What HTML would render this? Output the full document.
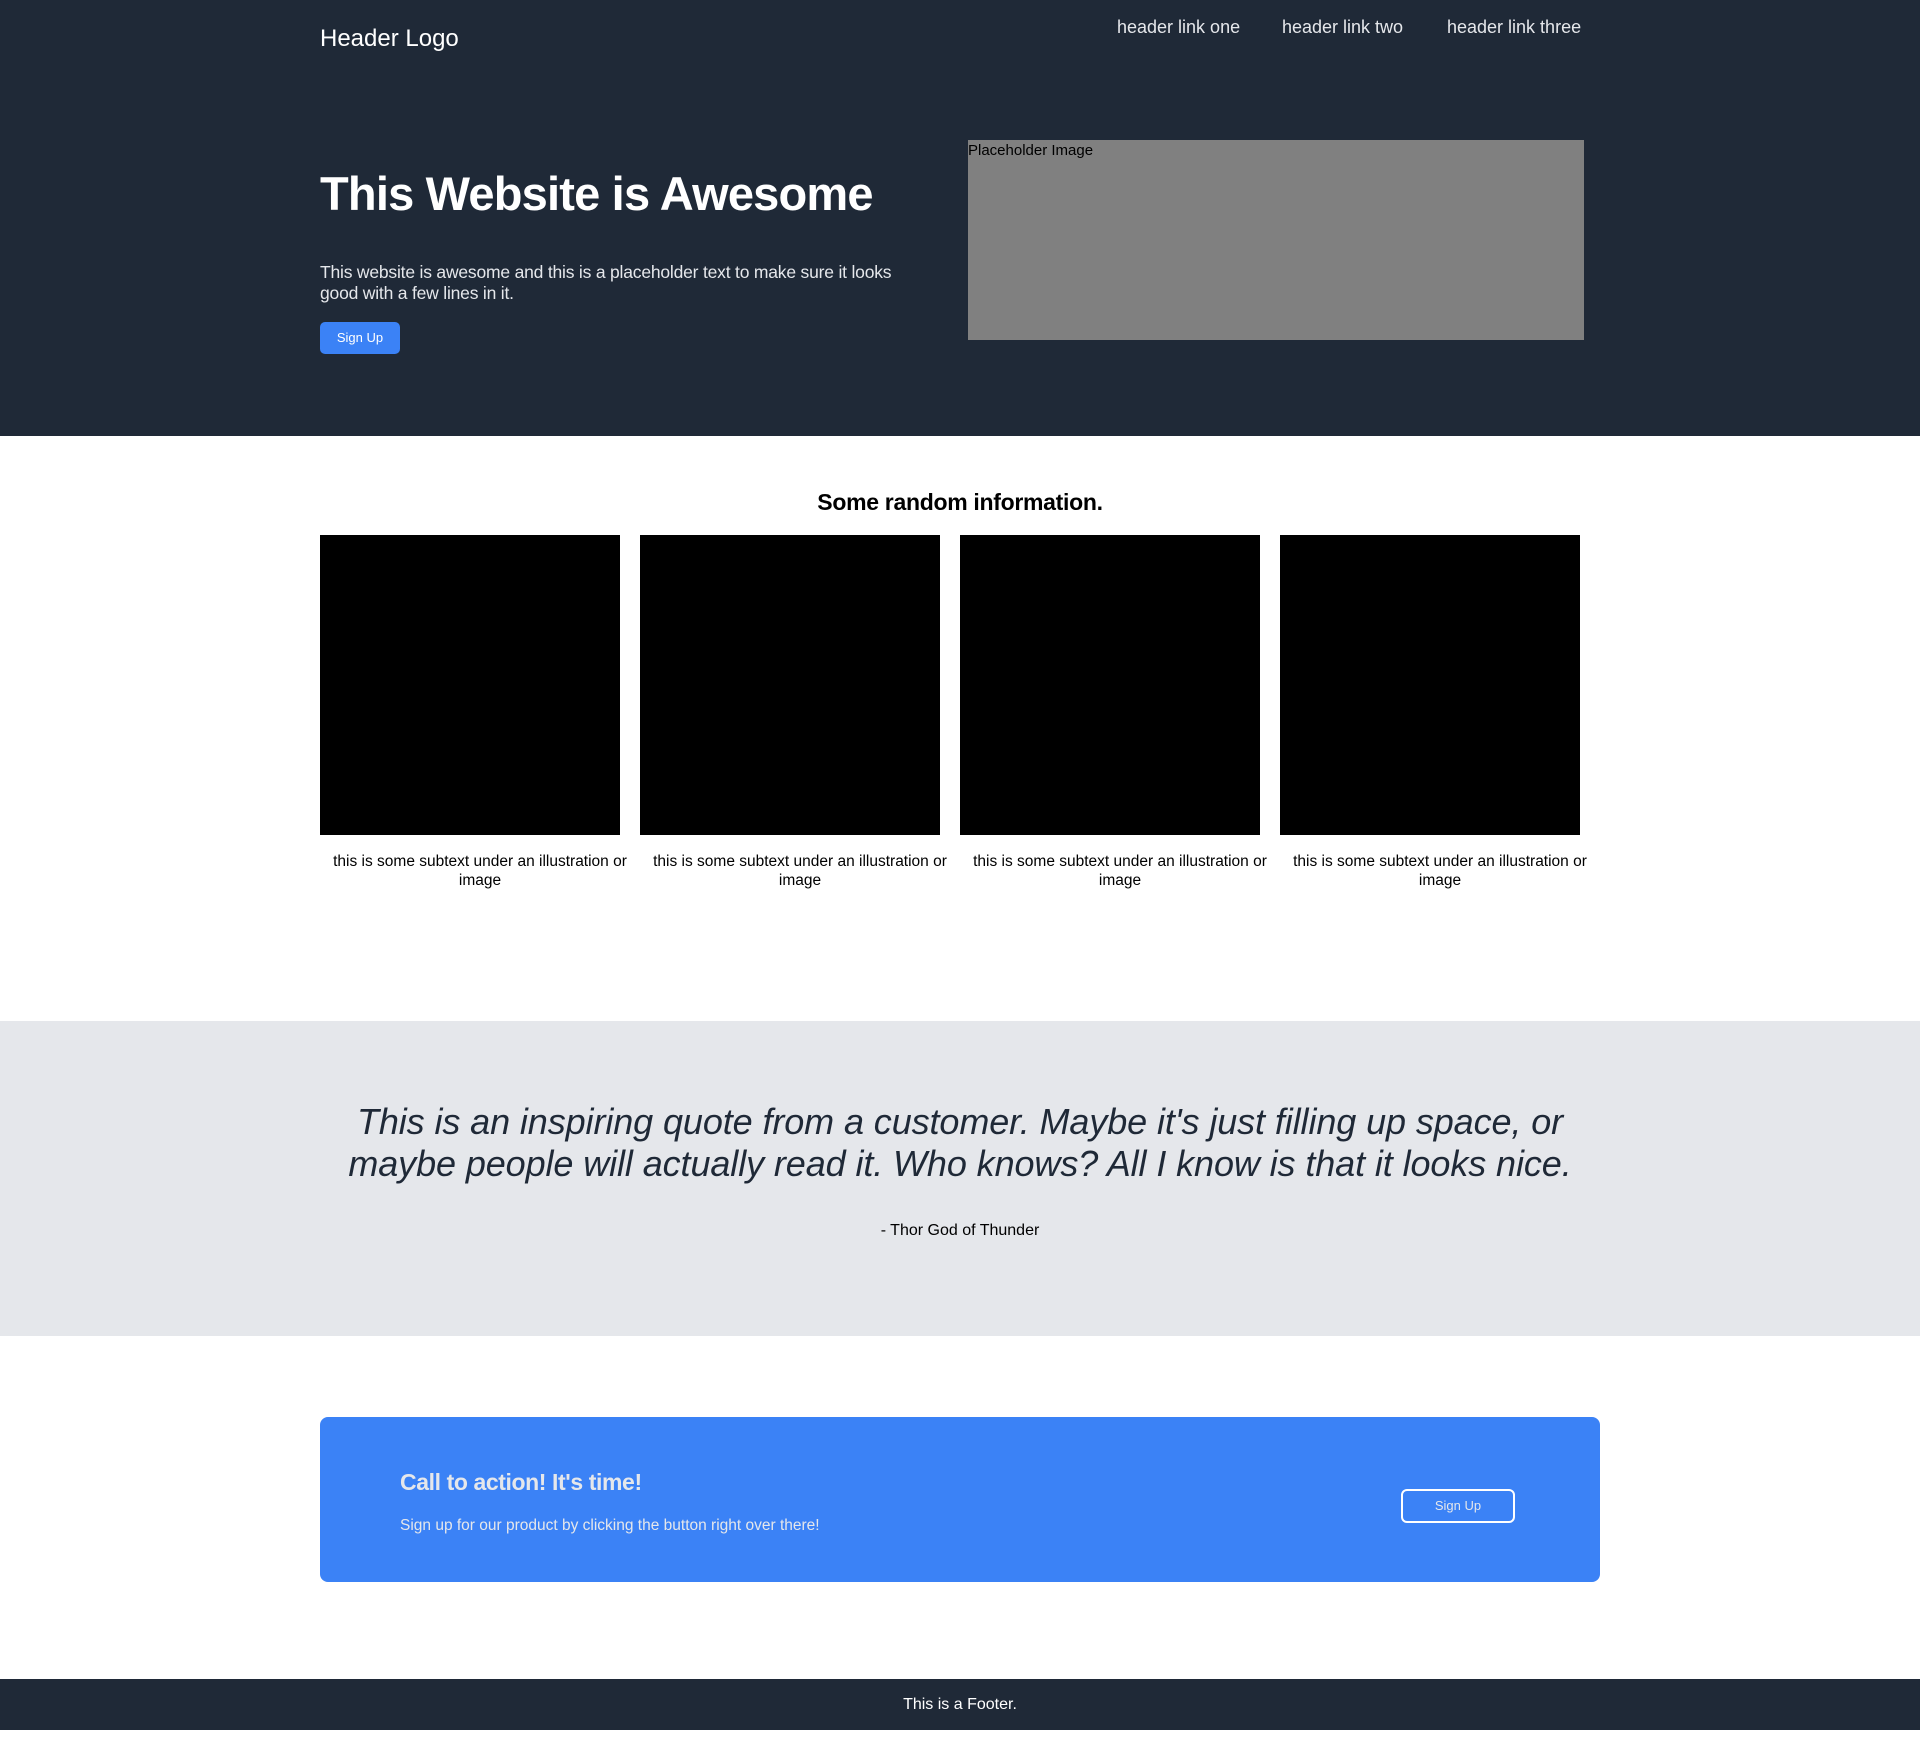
<!DOCTYPE html>
<html><head><meta charset="utf-8"><style>
*{margin:0;padding:0;box-sizing:border-box}
body{width:1920px;height:1746px;font-family:"Liberation Sans",Arial,sans-serif;background:#fff;position:relative;overflow:hidden}
.abs{position:absolute}
.hdr{left:0;top:0;width:1920px;height:436px;background:#1f2937}
.w{color:#fff}
.btn{background:#3b82f6;color:#fff;border-radius:5px;font-size:13px;text-align:center}
.card{width:300px;height:300px;background:#000;top:535px}
.sub{width:320px;top:852px;font-size:15.5px;line-height:19px;text-align:center;color:#000}
</style></head><body>
<div class="abs hdr"></div>
<div class="abs w" style="left:320px;top:25px;font-size:24px">Header Logo</div>
<div class="abs" style="left:1117px;top:17px;font-size:18px;color:#e5e7eb">header link one</div>
<div class="abs" style="left:1282px;top:17px;font-size:18px;color:#e5e7eb">header link two</div>
<div class="abs" style="left:1447px;top:17px;font-size:18px;color:#e5e7eb">header link three</div>
<div class="abs w" style="left:320px;top:166px;font-size:47px;font-weight:bold;letter-spacing:-0.8px">This Website is Awesome</div>
<div class="abs" style="left:320px;top:262px;width:605px;font-size:17.5px;line-height:21px;color:#e5e7eb;letter-spacing:-0.2px">This website is awesome and this is a placeholder text to make sure it looks good with a few lines in it.</div>
<div class="abs btn" style="left:320px;top:322px;width:80px;height:32px;line-height:32px">Sign Up</div>
<div class="abs" style="left:968px;top:140px;width:616px;height:200px;background:#808080;font-size:15px;color:#000;padding-top:2px">Placeholder Image</div>
<div class="abs" style="left:0;top:489px;width:1920px;text-align:center;font-size:23px;font-weight:bold;color:#000;letter-spacing:-0.3px">Some random information.</div>
<div class="abs card" style="left:320px"></div>
<div class="abs card" style="left:640px"></div>
<div class="abs card" style="left:960px"></div>
<div class="abs card" style="left:1280px"></div>
<div class="abs sub" style="left:320px">this is some subtext under an illustration or image</div>
<div class="abs sub" style="left:640px">this is some subtext under an illustration or image</div>
<div class="abs sub" style="left:960px">this is some subtext under an illustration or image</div>
<div class="abs sub" style="left:1280px">this is some subtext under an illustration or image</div>
<div class="abs" style="left:0;top:1021px;width:1920px;height:315px;background:#e5e7eb"></div>
<div class="abs" style="left:320px;top:1101px;width:1280px;text-align:center;font-size:36px;line-height:42px;font-style:italic;color:#1f2937;letter-spacing:-0.1px">This is an inspiring quote from a customer. Maybe it's just filling up space, or maybe people will actually read it. Who knows? All I know is that it looks nice.</div>
<div class="abs" style="left:0;top:1222px;width:1920px;text-align:center;font-size:16px;color:#000">- Thor God of Thunder</div>
<div class="abs" style="left:320px;top:1417px;width:1280px;height:165px;background:#3b82f6;border-radius:8px"></div>
<div class="abs" style="left:400px;top:1469px;font-size:23px;font-weight:bold;color:#e5e7eb;letter-spacing:-0.4px">Call to action! It's time!</div>
<div class="abs" style="left:400px;top:1517px;font-size:15.5px;color:#e5e7eb">Sign up for our product by clicking the button right over there!</div>
<div class="abs" style="left:1401px;top:1489px;width:114px;height:34px;border:2px solid #fff;border-radius:6px;color:#e5e7eb;font-size:13px;text-align:center;line-height:30px">Sign Up</div>
<div class="abs" style="left:0;top:1679px;width:1920px;height:51px;background:#1f2937;color:#fff;text-align:center;font-size:16px;line-height:52px">This is a Footer.</div>
</body></html>
